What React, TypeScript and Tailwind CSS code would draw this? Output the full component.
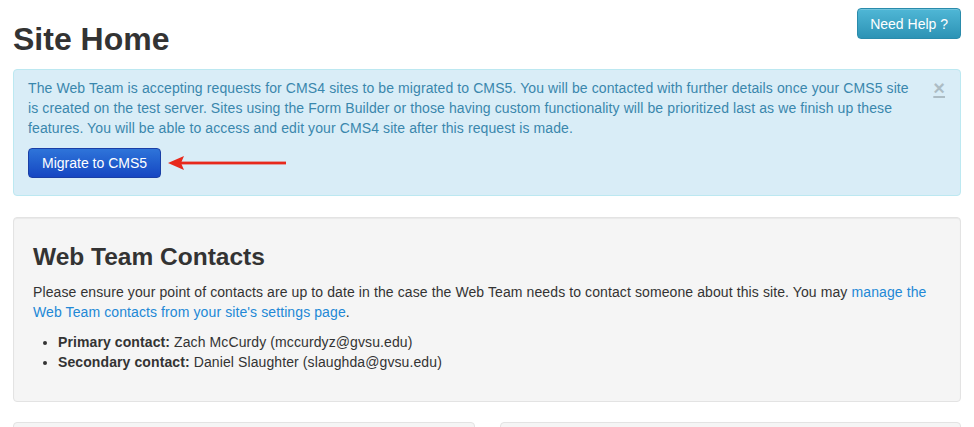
export default function App() {
  return (
    <div className="min-h-screen bg-white px-[13px] font-['Liberation_Sans',Arial,sans-serif] text-[14px] leading-5 text-[#333]">
      <header className="flex items-start justify-between">
        <h1 className="mt-[19px] text-[32px] font-bold leading-[40px] text-[#333]">Site Home</h1>
        <button className="mt-[8px] h-[31px] rounded-[4px] border border-[#2a8bab] bg-gradient-to-b from-[#4fb7d6] to-[#2c93b5] px-[12px] text-[14px] leading-5 text-white shadow-[inset_0_1px_0_rgba(255,255,255,0.2)]">
          Need Help ?
        </button>
      </header>

      <div className="relative mt-[10px] rounded-[4px] border border-[#bce8f1] bg-[#d9edf7] pb-[17px] pl-[14px] pr-[35px] pt-[8px] text-[#3a87ad]">
        <a className="absolute right-[15px] top-[8px] text-[20px] font-bold leading-5 text-[#000] underline opacity-20">×</a>
        <p className="mb-[10px] tracking-[0.1px]">
          The Web Team is accepting requests for CMS4 sites to be migrated to CMS5. You will be contacted with further details once your CMS5 site
          <br />
          is created on the test server. Sites using the Form Builder or those having custom functionality will be prioritized last as we finish up these
          <br />
          features. You will be able to access and edit your CMS4 site after this request is made.
        </p>
        <div className="flex items-center gap-[7px]">
          <button className="h-[30px] rounded-[4px] border border-[#1a3fa6] bg-gradient-to-b from-[#2f74d9] to-[#1746c2] px-[13px] text-[14px] leading-5 text-white">
            Migrate to CMS5
          </button>
          <svg width="118" height="16" viewBox="0 0 118 16">
            <polygon points="0,8 16,1 13,8 16,15" fill="#e8291c" />
            <rect x="12" y="6.6" width="106" height="2.8" fill="#e8291c" />
          </svg>
        </div>
      </div>

      <section className="mt-[21px] rounded-[4px] border border-[#e3e3e3] bg-[#f5f5f5] p-[19px] shadow-[inset_0_1px_1px_rgba(0,0,0,0.05)]">
        <h2 className="mb-[5px] text-[24.5px] font-bold leading-[40px] text-[#333]">Web Team Contacts</h2>
        <p className="mb-[10px] tracking-[0.1px]">
          Please ensure your point of contacts are up to date in the case the Web Team needs to contact someone about this site. You may{' '}
          <a className="text-[#2288d6]">manage the Web Team contacts from your site's settings page</a>.
        </p>
        <ul className="mb-[10px] list-disc pl-[25px] tracking-[0.1px]">
          <li>
            <b>Primary contact:</b> Zach McCurdy (mccurdyz@gvsu.edu)
          </li>
          <li>
            <b>Secondary contact:</b> Daniel Slaughter (slaughda@gvsu.edu)
          </li>
        </ul>
      </section>

      <div className="mt-[20px] grid grid-cols-2 gap-[25px]">
        <div className="h-[120px] rounded-[4px] border border-[#e3e3e3] bg-[#f5f5f5]" />
        <div className="h-[120px] rounded-[4px] border border-[#e3e3e3] bg-[#f5f5f5]" />
      </div>
    </div>
  );
}
